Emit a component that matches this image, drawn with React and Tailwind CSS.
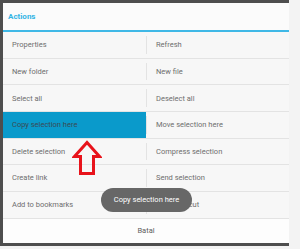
const ROWS = [
  ['Properties', 'Refresh'],
  ['New folder', 'New file'],
  ['Select all', 'Deselect all'],
  ['Copy selection here', 'Move selection here'],
  ['Delete selection', 'Compress selection'],
  ['Create link', 'Send selection'],
  ['Add to bookmarks', 'Add shortcut'],
];

function UpArrow() {
  return (
    <svg width="30" height="36" viewBox="0 0 30 36" className="absolute left-[72px] top-[140px]">
      <path
        d="M15 2.5 L27.5 16.5 L21.5 16.5 L21.5 33.5 L8.5 33.5 L8.5 16.5 L2.5 16.5 Z"
        fill="none"
        stroke="#e8131b"
        strokeWidth="3"
        strokeLinejoin="miter"
      />
    </svg>
  );
}

export default function App() {
  return (
    <div className="relative w-[300px] h-[249px] bg-[#f3f3f3] overflow-hidden" style={{ fontFamily: 'Roboto, sans-serif' }}>
      <div className="w-[289px] bg-[#4e4e4e] pt-[3px] pl-[3px] pb-[3px]">
        <div className="w-[286px] h-[240px] flex flex-col bg-[#fafafa]">
          {/* header */}
          <div className="h-[27px] flex items-center pl-[5px] bg-[#fbfbfb]">
            <span className="text-[8px] font-bold text-[#33b5e5]">Actions</span>
          </div>
          <div className="h-[2px] bg-[#3fb8e6]" />

          {/* action grid */}
          <div className="flex flex-col bg-[#f7f7f7]">
            {ROWS.map(([left, right], i) => (
              <div key={left} className="flex h-[26.67px] border-b border-[#e3e3e3]">
                <div className={`w-[143px] flex items-center pl-[9px] text-[7.5px] ${i === 3 ? 'bg-[#0a9acb] text-[#3a4a55]' : 'text-[#6e6e6e]'}`}>
                  {left}
                </div>
                <div className="w-px my-[4px] bg-[#e3e3e3]" />
                <div className="flex-1 flex items-center pl-[9px] text-[7.5px] text-[#6e6e6e]">
                  {right}
                </div>
              </div>
            ))}
          </div>

          {/* cancel */}
          <div className="flex-1 flex items-center justify-center bg-[#fdfdfd] text-[7.5px] text-[#5e5e5e]">
            Batal
          </div>
        </div>
      </div>

      <UpArrow />

      {/* toast */}
      <div className="absolute left-[101px] top-[188px] w-[91px] h-[24px] rounded-full bg-[#676767] flex items-center justify-center">
        <span className="text-[7.5px] text-white">Copy selection here</span>
      </div>
    </div>
  );
}
